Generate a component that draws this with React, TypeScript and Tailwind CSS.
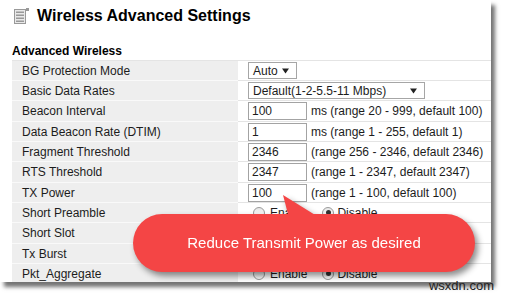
import React from "react";

type Row = {
  label: string;
  h: string;
  kind: "select" | "input" | "radio";
  value?: string;
  w?: string;
  note?: string;
};

const rows: Row[] = [
  { label: "BG Protection Mode", h: "h-[20px]", kind: "select", value: "Auto", w: "w-[49px]" },
  { label: "Basic Data Rates", h: "h-[20px]", kind: "select", value: "Default(1-2-5.5-11 Mbps)", w: "w-[177px]" },
  { label: "Beacon Interval", h: "h-[21px]", kind: "input", value: "100", note: "ms (range 20 - 999, default 100)" },
  { label: "Data Beacon Rate (DTIM)", h: "h-[20px]", kind: "input", value: "1", note: "ms (range 1 - 255, default 1)" },
  { label: "Fragment Threshold", h: "h-[20px]", kind: "input", value: "2346", note: "(range 256 - 2346, default 2346)" },
  { label: "RTS Threshold", h: "h-[21px]", kind: "input", value: "2347", note: "(range 1 - 2347, default 2347)" },
  { label: "TX Power", h: "h-[20px]", kind: "input", value: "100", note: "(range 1 - 100, default 100)" },
  { label: "Short Preamble", h: "h-[20px]", kind: "radio" },
  { label: "Short Slot", h: "h-[21px]", kind: "radio" },
  { label: "Tx Burst", h: "h-[20px]", kind: "radio" },
  { label: "Pkt_Aggregate", h: "h-[20px]", kind: "radio" },
];

function Caret() {
  return (
    <svg width="7" height="6" viewBox="0 0 7 6">
      <path d="M0 0.5h7L3.5 5.5z" fill="#222" />
    </svg>
  );
}

function Radio({ checked }: { checked?: boolean }) {
  return (
    <span className="w-[12px] h-[12px] rounded-full border border-[#9a9a9a] bg-gradient-to-b from-[#e8e8e8] to-white flex items-center justify-center">
      {checked && <span className="w-[5px] h-[5px] rounded-full bg-[#333]" />}
    </span>
  );
}

function Value({ row }: { row: Row }) {
  if (row.kind === "select") {
    return (
      <div className={`${row.w} h-[17px] border border-[#a6a6a6] bg-white flex items-center justify-between pl-[4px] pr-[7px]`}>
        <span>{row.value}</span>
        <Caret />
      </div>
    );
  }
  if (row.kind === "input") {
    return (
      <div className="flex items-center">
        <div className="w-[59px] h-[18px] border border-[#a3a3a3] bg-white flex items-center pl-[3px]">{row.value}</div>
        <span className="ml-[4px]">{row.note}</span>
      </div>
    );
  }
  return (
    <div className="flex items-center ml-[5px]">
      <Radio />
      <span className="ml-[5px]">Enable</span>
      <span className="ml-[15px]"><Radio checked /></span>
      <span className="ml-[3px]">Disable</span>
    </div>
  );
}

export default function App() {
  return (
    <div className="w-[506px] h-[296px] bg-white relative overflow-hidden font-['Liberation_Sans',Arial,sans-serif] text-[#1c1c1c]">
      <div className="w-[491px] h-[282px] bg-white overflow-hidden shadow-[4px_5px_4px_rgba(0,0,0,0.55)]">
        <div className="h-[30px] flex items-center pl-[14px] pt-[1px] gap-[8px]">
          <svg width="15" height="16" viewBox="0 0 15 16">
            <rect x="0.5" y="1.5" width="11" height="14" fill="#e9e9e9" stroke="#999" />
            <rect x="2" y="3.5" width="8" height="1.5" fill="#999" />
            <rect x="2" y="6.5" width="8" height="1.5" fill="#999" />
            <rect x="2" y="9.5" width="8" height="1.5" fill="#999" />
            <rect x="2" y="12.5" width="8" height="1.5" fill="#999" />
            <rect x="12" y="0" width="3" height="3" fill="#999" />
          </svg>
          <h1 className="text-[16px] font-bold text-black">Wireless Advanced Settings</h1>
        </div>
        <div className="h-[30px] pt-[13px] pl-[12px] text-[12px] leading-[16px] font-bold text-black">Advanced Wireless</div>
        <div className="ml-[12px] border-t border-[#e4e4e4] text-[12px]">
          {rows.map((row) => (
            <div key={row.label} className={`flex ${row.h}`}>
              <div className="w-[226px] bg-[#eeeeee] border-b border-[#f9f9f9] pl-[10px] flex items-center">{row.label}</div>
              <div className="flex-1 border-b border-[#e4e4e4] pl-[10px] flex items-center">
                <Value row={row} />
              </div>
            </div>
          ))}
        </div>
      </div>

      <div className="absolute left-[133px] top-[194px] w-[342px] h-[78px] drop-shadow-[3px_4px_3px_rgba(0,0,0,0.45)]">
        <svg className="absolute left-[147px] top-0" width="45" height="24" viewBox="0 0 45 24">
          <polygon points="3,1 9,24 40,24" fill="#f44545" />
        </svg>
        <div className="absolute left-0 top-[20px] w-[342px] h-[58px] rounded-full bg-[#f44545] flex items-center justify-center text-white text-[15px]">
          Reduce Transmit Power as desired
        </div>
      </div>

      <div className="absolute right-[12px] bottom-[3px] text-[13px] leading-[15px] text-[#222]">wsxdn.com</div>
    </div>
  );
}
